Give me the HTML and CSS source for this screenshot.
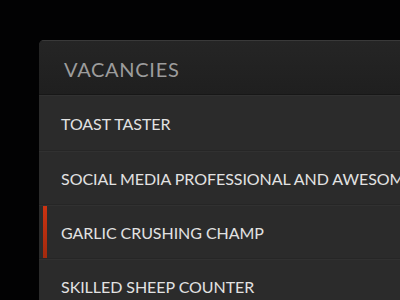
FILE: index.html
```html
<!DOCTYPE html>
<html>
<head>
<meta charset="utf-8">
<link rel="stylesheet" href="styles.css">
</head>
<body>
<div class="stage">
  <section class="panel">
    <header class="panel-head"><h1 class="title">VACANCIES</h1></header>
    <ul class="list">
      <li class="item">TOAST TASTER</li>
      <li class="item">SOCIAL MEDIA PROFESSIONAL AND AWESOME</li>
      <li class="item active">GARLIC CRUSHING CHAMP</li>
      <li class="item">SKILLED SHEEP COUNTER</li>
    </ul>
  </section>
</div>
</body>
</html>
```
FILE: styles.css
```css
html, body {
  margin: 0;
  padding: 0;
  background: #020203;
  overflow: hidden;
}
.stage {
  width: 400px;
  height: 300px;
  overflow: hidden;
  padding: 40px 0 0 39px;
  box-sizing: border-box;
}
.panel {
  width: 480px;
  border-radius: 5px 5px 0 0;
  background: #2b2b2b;
  overflow: hidden;
  font-family: Lato, "Open Sans", sans-serif;
}
.panel-head {
  height: 55px;
  background: linear-gradient(#252525, #1f1f1f);
  border-top: 1px solid #393939;
  border-bottom: 1px solid #171717;
  box-sizing: border-box;
  display: flex;
  align-items: center;
  padding-left: 25px;
}
.title {
  margin: 0;
  font-weight: 400;
  font-size: 20px;
  letter-spacing: 0.7px;
  color: #9c9c9c;
  padding-top: 3px;
}
.list {
  list-style: none;
  margin: 0;
  padding: 0;
}
.item {
  height: 54px;
  box-sizing: border-box;
  border-top: 1px solid #313131;
  border-bottom: 1px solid #262626;
  display: flex;
  align-items: center;
  padding: 1px 0 0 22px;
  font-size: 16px;
  letter-spacing: -0.05px;
  color: #e2e2e2;
  white-space: nowrap;
  position: relative;
}
.item:first-child {
  height: 56px;
}
.item.active::before {
  content: "";
  position: absolute;
  left: 4px;
  top: 0;
  bottom: 0;
  width: 4px;
  background: linear-gradient(#cc3311, #a22a0e);
}
```
